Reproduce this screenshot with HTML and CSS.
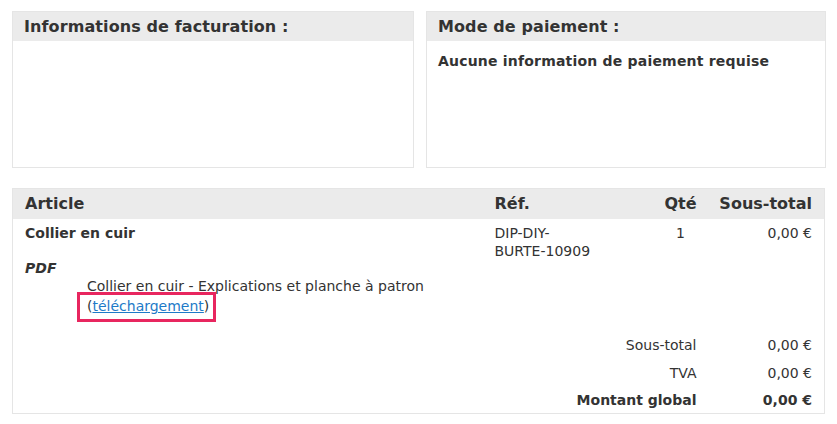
FILE: index.html
```html
<!DOCTYPE html>
<html>
<head>
  <title>Commande</title>
  <link rel="stylesheet" href="styles.css">
</head>
<body>
  <div class="boxes">
    <div class="box">
      <h2>Informations de facturation :</h2>
      <div class="box-content"></div>
    </div>
    <div class="box">
      <h2>Mode de paiement :</h2>
      <div class="box-content">
        <strong>Aucune information de paiement requise</strong>
      </div>
    </div>
  </div>

  <table class="items">
    <thead>
      <tr>
        <th class="col-name">Article</th>
        <th class="col-ref">Réf.</th>
        <th class="col-qty">Qté</th>
        <th class="col-total">Sous-total</th>
      </tr>
    </thead>
    <tbody>
      <tr>
        <td class="col-name">
          <div class="item-name">Collier en cuir</div>
          <div class="item-type">PDF</div>
          <div class="item-links">
            Collier en cuir - Explications et planche à patron<br>
            <span class="highlight">(<a href="#">téléchargement</a>)</span>
          </div>
        </td>
        <td class="col-ref">DIP-DIY-<br>BURTE-10909</td>
        <td class="col-qty">1</td>
        <td class="col-total">0,00 €</td>
      </tr>
    </tbody>
    <tfoot>
      <tr class="first">
        <td colspan="3" class="label">Sous-total</td>
        <td class="col-total">0,00 €</td>
      </tr>
      <tr>
        <td colspan="3" class="label">TVA</td>
        <td class="col-total">0,00 €</td>
      </tr>
      <tr class="grand">
        <td colspan="3" class="label">Montant global</td>
        <td class="col-total">0,00 €</td>
      </tr>
    </tfoot>
  </table>
</body>
</html>
```

FILE: styles.css
```css
body {
  font-family: "DejaVu Sans", Verdana, sans-serif;
  font-size: 14px;
  line-height: 18px;
  color: #333;
  margin: 0;
  padding: 11px 11px 11px 12px;
  background: #fff;
}
.boxes {
  display: grid;
  grid-template-columns: 402px 400px;
  gap: 12px;
  margin-bottom: 20px;
}
.box {
  border: 1px solid #e5e5e5;
  height: 155px;
}
.box h2 {
  margin: 0;
  background-color: #ebebeb;
  font-size: 16px;
  letter-spacing: 0.1px;
  font-weight: bold;
  line-height: 29px;
  padding: 0 11px;
}
.box-content {
  padding: 11px 11px;
}
.box-content strong {
  letter-spacing: 0.2px;
}
.items {
  width: 813px;
  border: 1px solid #e5e5e5;
  border-collapse: collapse;
}
.items th,
.items td {
  box-sizing: border-box;
}
.items th {
  background-color: #ebebeb;
  font-size: 16px;
  text-align: left;
  line-height: 30px;
  padding: 0 12px;
}
.items td {
  vertical-align: top;
  padding: 5px 12px 0;
}
.col-ref {
  width: 172px;
}
.items .col-qty {
  text-align: center;
  width: 52px;
  padding-left: 0;
  padding-right: 0;
}
.col-total {
  text-align: right;
  width: 118px;
}
.items th.col-total {
  text-align: right;
}
.item-name {
  font-weight: bold;
}
.item-type {
  font-weight: bold;
  font-style: italic;
  margin-top: 17px;
}
.item-links {
  padding-left: 62px;
}
.highlight {
  display: inline-block;
  border: 3px solid #e8265f;
  padding: 3px 4px 5px 7px;
  margin-left: -10px;
  margin-top: -3px;
  line-height: 16px;
}
.highlight a {
  color: #1d7ac8;
}
.items tfoot td {
  text-align: right;
  padding-top: 10px;
}
.items tfoot .label {
  padding-right: 10px;
}
.items tfoot tr.first td {
  padding-top: 14px;
}
.items tfoot tr.grand td {
  font-weight: bold;
  padding-top: 9px;
  padding-bottom: 4px;
}
```
